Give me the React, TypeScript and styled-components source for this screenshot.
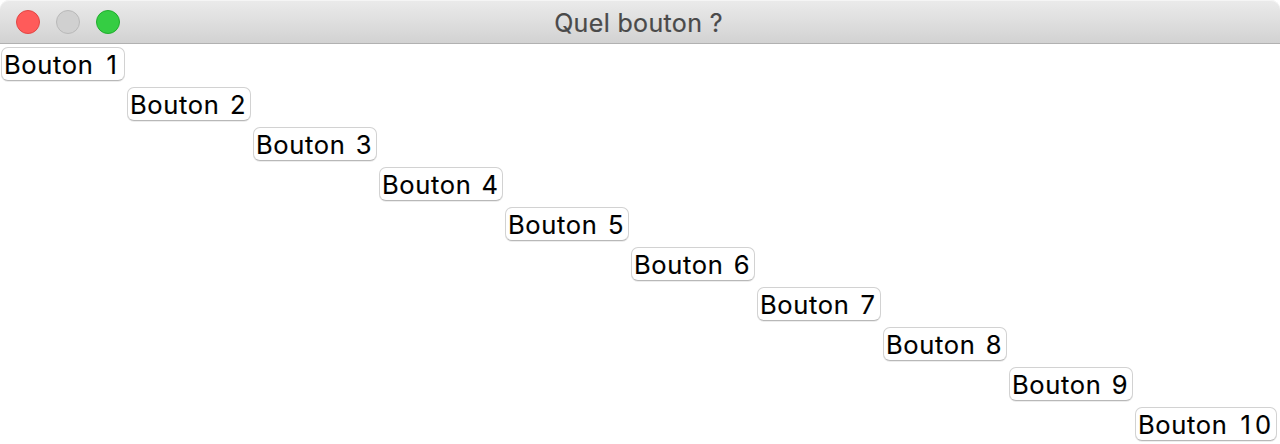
import React from 'react';
import styled, { createGlobalStyle } from 'styled-components';

const GlobalStyle = createGlobalStyle`
  body { margin: 0; background: #fff; }
  * { box-sizing: border-box; }
`;

const Window = styled.main`
  width: 1280px;
  height: 444px;
  overflow: hidden;
  background: #fff;
  font-family: Inter, sans-serif;
`;

const TitleBar = styled.header`
  height: 44px;
  display: grid;
  grid-template-columns: 120px 1fr 120px;
  align-items: center;
  border-radius: 9px 9px 0 0;
  border-bottom: 1px solid #b1b1b1;
  background: linear-gradient(#ebebeb, #d2d2d2);
  box-shadow: inset 0 1px #f5f5f5;
`;

const Controls = styled.div`
  display: flex;
  gap: 16px;
  padding-left: 16px;
`;

const Control = styled.span<{ $fill: string; $edge: string }>`
  width: 24px;
  height: 24px;
  border-radius: 50%;
  border: 1px solid ${p => p.$edge};
  background: ${p => p.$fill};
`;

const Title = styled.h1`
  margin: 0;
  padding: 2px 3px 0 0;
  text-align: center;
  font: 400 25px/36px Inter, sans-serif;
  letter-spacing: 0.35px;
  color: #4a4a4a;
  -webkit-text-stroke: 0.2px #4a4a4a;
  white-space: nowrap;
`;

const ButtonGrid = styled.div`
  display: grid;
  grid-template-columns: repeat(9, 126px) 144px;
  grid-auto-rows: 40px;
  padding-left: 1px;
`;

const Button = styled.button<{ $step: number }>`
  grid-column: ${p => p.$step};
  grid-row: ${p => p.$step};
  width: ${p => (p.$step === 10 ? 142 : 124)}px;
  height: 34px;
  margin: 3px 0 0;
  padding: 1px 0 0 2px;
  text-align: left;
  border: 1px solid #d2d2d2;
  border-bottom-color: #b8b8b8;
  border-radius: 7px;
  background: #fff;
  box-shadow: 0 1px #ededed;
  color: #000;
  font: 400 25.5px/32px Inter, sans-serif;
  -webkit-text-stroke: 0.15px #000;
  letter-spacing: 0.65px;
  word-spacing: 2px;
  white-space: nowrap;
`;

const Digit = styled.span`
  display: inline-block;
  width: 17.5px;
  text-align: center;
`;

export default function App() {
  return (
    <Window>
      <GlobalStyle />
      <TitleBar>
        <Controls>
          <Control $fill="#ff5b5a" $edge="#e24644" />
          <Control $fill="#d0d0d0" $edge="#b9b9b9" />
          <Control $fill="#35cd43" $edge="#20ad2d" />
        </Controls>
        <Title>Quel bouton ?</Title>
      </TitleBar>
      <ButtonGrid>
        {Array.from({ length: 10 }, (_, i) => (
          <Button key={i} $step={i + 1}>
            Bouton{' '}
            {String(i + 1).split('').map((digit, position) => (
              <Digit key={position}>{digit}</Digit>
            ))}
          </Button>
        ))}
      </ButtonGrid>
    </Window>
  );
}
